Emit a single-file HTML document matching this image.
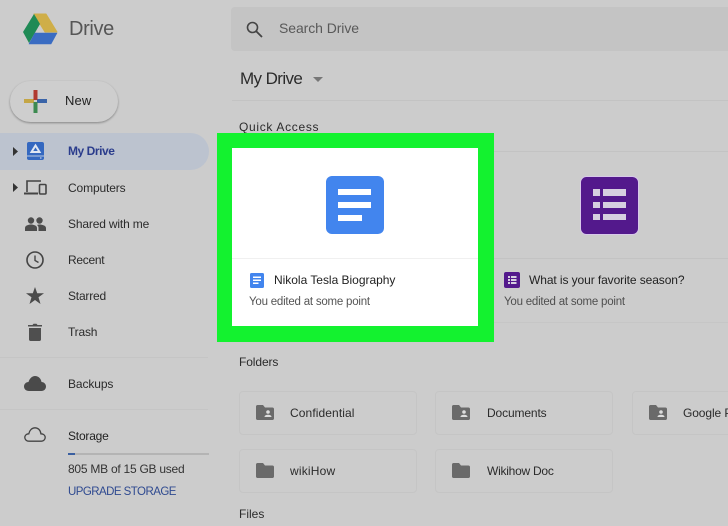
<!DOCTYPE html>
<html><head><meta charset="utf-8"><style>
html,body{margin:0;padding:0}
#p{position:relative;width:728px;height:526px;overflow:hidden;background:#cccccc;font-family:"Liberation Sans",sans-serif;color:#2a2a2a}
.t{position:absolute;white-space:nowrap;font-size:12px;line-height:14px;letter-spacing:-.15px;color:#2b2b2b}
.a{position:absolute}
svg{position:absolute;overflow:visible}
.fc{position:absolute;width:178px;height:44px;border:1px solid #c5c5c5;border-radius:4px;box-sizing:border-box}
.ln{position:absolute;height:1px;background:#c3c3c3}
</style></head><body><div id="p">
<!-- logo -->
<svg style="left:22px;top:13px" width="36" height="32" viewBox="0 0 36 32">
<path d="M12 1H24L35 19H23Z" fill="#cfae48" stroke="#cfae48" stroke-linejoin="round"/>
<path d="M12 1L1 19L7 30L18 11Z" fill="#1f8a55"/>
<path d="M7 31L13 20H35L29 31Z" fill="#3a6cc2" stroke="#3a6cc2" stroke-width=".6" stroke-linejoin="round"/>
</svg>
<div class="t" style="left:69px;top:17px;font-size:20px;line-height:24px;color:#565656;letter-spacing:-.35px">Drive</div>
<!-- new -->
<div class="a" style="left:10px;top:81px;width:108px;height:41px;border-radius:21px;background:#cecece;box-shadow:0 1px 2px rgba(0,0,0,.35)"></div>
<svg style="left:24px;top:90px" width="23" height="23" viewBox="0 0 23 23">
<rect x="0" y="9" width="10" height="4" fill="#c4a646"/><rect x="13" y="9" width="10" height="4" fill="#3a64a8"/>
<rect x="9.500" y="0" width="4" height="10" fill="#b03a30"/><rect x="9.500" y="12" width="4" height="11" fill="#3c8a50"/></svg>
<div class="t" style="left:65px;top:93px;font-size:13px;line-height:16px;color:#222;letter-spacing:.1px">New</div>
<!-- active -->
<div class="a" style="left:0;top:133px;width:209px;height:37px;border-radius:0 19px 19px 0;background:#bcc3cf"></div>
<svg style="left:13px;top:147px" width="5" height="9"><path d="M0 0L5 4.500L0 9Z" fill="#333"/></svg>
<svg style="left:13px;top:183px" width="5" height="9"><path d="M0 0L5 4.500L0 9Z" fill="#333"/></svg>
<svg style="left:27px;top:142px" width="17" height="18" viewBox="0 0 17 18">
<rect width="17" height="18" rx="2" fill="#3468c0"/><rect x="0" y="13.500" width="17" height="1" fill="#b9c7df"/>
<path d="M8.500 3.500L12.500 10H4.500Z" fill="none" stroke="#dfe6f2" stroke-width="2"/><rect x="13" y="15.500" width="1.500" height="1" fill="#dfe6f2"/></svg>
<div class="t" style="left:68px;top:144px;color:#2a3c8c;font-weight:bold;letter-spacing:-.45px">My Drive</div>
<svg style="left:24px;top:180px" width="23" height="15" viewBox="0 0 23 15">
<path d="M3 12V1H17" fill="none" stroke="#444" stroke-width="1.600"/><path d="M0 13.500H14" stroke="#444" stroke-width="2"/>
<rect x="15.500" y="4.500" width="6.500" height="9.500" rx="1" fill="none" stroke="#444" stroke-width="1.600"/></svg>
<div class="t" style="left:68px;top:181px;letter-spacing:-.13px">Computers</div>
<svg style="left:25px;top:217px" width="21" height="14" viewBox="0 0 21 14">
<circle cx="6" cy="3.500" r="3.200" fill="#4d4d4d"/><circle cx="14.500" cy="3.500" r="3.200" fill="#4d4d4d"/>
<path d="M0 14V11C0 8.500 3.500 7.500 6 7.500S12 8.500 12 11V14Z" fill="#4d4d4d"/><path d="M13.500 14V10.800C13.500 9.500 12.800 8.500 12 8C13 7.600 14 7.500 14.500 7.500C17 7.500 21 8.500 21 11V14Z" fill="#4d4d4d"/></svg>
<div class="t" style="left:68px;top:217px;letter-spacing:-.16px">Shared with me</div>
<svg style="left:26px;top:251px" width="18" height="18" viewBox="0 0 18 18"><circle cx="9" cy="9" r="8" fill="none" stroke="#444" stroke-width="1.600"/><path d="M9 4.500V9.500L12.500 11.500" fill="none" stroke="#444" stroke-width="1.400"/></svg>
<div class="t" style="left:68px;top:253px;letter-spacing:-.3px">Recent</div>
<svg style="left:26px;top:287px" width="18" height="17" viewBox="0 0 18 17"><path d="M9 0L11.200 6.200H18L12.500 10.200L14.500 17L9 13L3.500 17L5.500 10.200L0 6.200H6.800Z" fill="#4a4a4a"/></svg>
<div class="t" style="left:68px;top:289px;letter-spacing:-.2px">Starred</div>
<svg style="left:28px;top:323px" width="14" height="18" viewBox="0 0 14 18"><path d="M1 5H13V16.500C13 17.300 12.300 18 11.500 18H2.500C1.700 18 1 17.300 1 16.500Z" fill="#4f4f4f"/><path d="M0 2H4.500L5.500 .8H8.500L9.500 2H14V3.500H0Z" fill="#4f4f4f"/></svg>
<div class="t" style="left:68px;top:325px;letter-spacing:-.2px">Trash</div>
<div class="ln" style="left:0;top:357px;width:208px;background:#c5c5c5"></div>
<svg style="left:24px;top:376px" width="22" height="15" viewBox="0 0 22 15"><path d="M5 15C2 15 0 13 0 10.500C0 8 2 6 4.500 6C5.500 2.500 8 0 11 0C14.500 0 17 2.500 17.500 6C20 6 22 8 22 10.500C22 13 20 15 17.500 15Z" fill="#4a4a4a"/></svg>
<div class="t" style="left:68px;top:377px;letter-spacing:-.1px">Backups</div>
<div class="ln" style="left:0;top:409px;width:208px;background:#c5c5c5"></div>
<svg style="left:24px;top:427px" width="22" height="15" viewBox="0 0 22 15"><path d="M5 14.200C2.500 14.200 .8 12.500 .8 10.500C.8 8.300 2.500 6.800 4.800 6.800C5.500 3.200 8 .8 11 .8C14 .8 16.500 3 16.900 6.800C19.500 6.800 21.200 8.300 21.200 10.500C21.200 12.500 19.500 14.200 17.500 14.200Z" fill="none" stroke="#444" stroke-width="1.300"/></svg>
<div class="t" style="left:68px;top:429px;color:#222;letter-spacing:-.2px">Storage</div>
<div class="a" style="left:68px;top:453px;width:141px;height:2px;background:#b4b4b4"></div>
<div class="a" style="left:68px;top:453px;width:7px;height:2px;background:#3a5fa0"></div>
<div class="t" style="left:68px;top:462px;letter-spacing:-.25px;color:#333">805 MB of 15 GB used</div>
<div class="t" style="left:68px;top:485px;color:#2f4a90;font-size:11.500px;letter-spacing:-.55px">UPGRADE STORAGE</div>
<!-- search -->
<div class="a" style="left:231px;top:7px;width:497px;height:44px;background:#c4c4c4;border-radius:4px 0 0 4px"></div>
<svg style="left:246px;top:21px" width="17" height="17" viewBox="0 0 17 17"><circle cx="6.500" cy="6.500" r="5" fill="none" stroke="#444" stroke-width="1.600"/><path d="M10.200 10.200L16 16" stroke="#444" stroke-width="1.800"/></svg>
<div class="t" style="left:279px;top:20px;font-size:14px;line-height:17px;color:#595959;letter-spacing:-.08px">Search Drive</div>
<div class="t" style="left:240px;top:69px;font-size:17px;line-height:20px;color:#2b2b2b;letter-spacing:-.6px">My Drive</div>
<svg style="left:313px;top:77px" width="10" height="5"><path d="M0 0H10L5 5Z" fill="#777"/></svg>
<div class="ln" style="left:232px;top:100px;width:496px;background:#c3c3c3"></div>
<div class="t" style="left:239px;top:120px;letter-spacing:.68px">Quick Access</div>
<!-- forms card lines -->
<div class="ln" style="left:494px;top:151px;width:234px"></div>
<div class="ln" style="left:494px;top:258px;width:234px"></div>
<div class="ln" style="left:494px;top:322px;width:234px;background:#c6c6c6"></div>
<!-- forms -->
<svg style="left:580px;top:176px" width="59" height="59" viewBox="0 0 59 59">
<rect x=".5" y=".5" width="58" height="58" rx="6" fill="#53198c" stroke="#d8c8ea" stroke-width="1"/>
<g fill="#d6cfe0"><rect x="13" y="13" width="7" height="7"/><rect x="13" y="26" width="7" height="6"/><rect x="13" y="38" width="7" height="6"/>
<rect x="23" y="13" width="23" height="7"/><rect x="23" y="26" width="23" height="6"/><rect x="23" y="38" width="23" height="6"/></g></svg>
<svg style="left:504px;top:272px" width="16" height="16" viewBox="0 0 16 16"><rect width="16" height="16" rx="2" fill="#53198c"/><g fill="#d6cfe0"><rect x="4" y="4" width="2" height="2"/><rect x="4" y="7" width="2" height="2"/><rect x="4" y="10" width="2" height="2"/><rect x="7" y="4" width="5.500" height="2"/><rect x="7" y="7" width="5.500" height="2"/><rect x="7" y="10" width="5.500" height="2"/></g></svg>
<div class="t" style="left:529px;top:273px;letter-spacing:-.09px;color:#222">What is your favorite season?</div>
<div class="t" style="left:504px;top:295px;font-size:11.500px;color:#4f4f4f;letter-spacing:-.22px">You edited at some point</div>
<!-- highlight -->
<div class="a" style="left:217px;top:133px;width:277px;height:209px;background:#13f22f"></div>
<div class="a" style="left:232px;top:148px;width:246px;height:178px;background:#fff"></div>
<div class="a" style="left:232px;top:258px;width:246px;height:1px;background:#f0f0f0"></div>
<svg style="left:326px;top:176px" width="58" height="58" viewBox="0 0 58 58"><rect width="58" height="58" rx="6" fill="#4285ee"/><g fill="#fff"><rect x="12" y="13" width="33" height="6"/><rect x="12" y="26" width="33" height="6"/><rect x="12" y="39" width="24" height="6"/></g></svg>
<svg style="left:250px;top:273px" width="14" height="15" viewBox="0 0 14 15"><rect width="14" height="15" rx="1.500" fill="#4285ee"/><g fill="#fff"><rect x="3" y="3.500" width="8" height="1.500"/><rect x="3" y="6.500" width="8" height="1.500"/><rect x="3" y="9.500" width="5.500" height="1.500"/></g></svg>
<div class="t" style="left:274px;top:273px;letter-spacing:-.02px;color:#222">Nikola Tesla Biography</div>
<div class="t" style="left:249px;top:295px;font-size:11.500px;color:#555;letter-spacing:-.22px">You edited at some point</div>
<!-- folders -->
<div class="t" style="left:239px;top:355px;letter-spacing:-.1px">Folders</div>
<div class="fc" style="left:239px;top:391px"></div>
<div class="fc" style="left:435px;top:391px"></div>
<div class="fc" style="left:632px;top:391px;width:120px"></div>
<div class="fc" style="left:239px;top:449px"></div>
<div class="fc" style="left:435px;top:449px"></div>
<svg style="left:256px;top:405px" width="18" height="15" viewBox="0 0 18 15"><path d="M1.500 0H7L9 2.500H16.500C17.300 2.500 18 3.200 18 4V13.500C18 14.300 17.300 15 16.500 15H1.500C.7 15 0 14.300 0 13.500V1.500C0 .7.7 0 1.500 0Z" fill="#6a6a6a"/><circle cx="12" cy="7" r="1.800" fill="#ddd"/><path d="M8.500 12C8.500 10.300 10.500 9.800 12 9.800S15.500 10.300 15.500 12Z" fill="#ddd"/></svg>
<svg style="left:452px;top:405px" width="18" height="15" viewBox="0 0 18 15"><path d="M1.500 0H7L9 2.500H16.500C17.300 2.500 18 3.200 18 4V13.500C18 14.300 17.300 15 16.500 15H1.500C.7 15 0 14.300 0 13.500V1.500C0 .7.7 0 1.500 0Z" fill="#6a6a6a"/><circle cx="12" cy="7" r="1.800" fill="#ddd"/><path d="M8.500 12C8.500 10.300 10.500 9.800 12 9.800S15.500 10.300 15.500 12Z" fill="#ddd"/></svg>
<svg style="left:649px;top:405px" width="18" height="15" viewBox="0 0 18 15"><path d="M1.500 0H7L9 2.500H16.500C17.300 2.500 18 3.200 18 4V13.500C18 14.300 17.300 15 16.500 15H1.500C.7 15 0 14.300 0 13.500V1.500C0 .7.7 0 1.500 0Z" fill="#6a6a6a"/><circle cx="12" cy="7" r="1.800" fill="#ddd"/><path d="M8.500 12C8.500 10.300 10.500 9.800 12 9.800S15.500 10.300 15.500 12Z" fill="#ddd"/></svg>
<svg style="left:256px;top:463px" width="18" height="15" viewBox="0 0 18 15"><path d="M1.500 0H7L9 2.500H16.500C17.300 2.500 18 3.200 18 4V13.500C18 14.300 17.300 15 16.500 15H1.500C.7 15 0 14.300 0 13.500V1.500C0 .7.7 0 1.500 0Z" fill="#6a6a6a"/></svg>
<svg style="left:452px;top:463px" width="18" height="15" viewBox="0 0 18 15"><path d="M1.500 0H7L9 2.500H16.500C17.300 2.500 18 3.200 18 4V13.500C18 14.300 17.300 15 16.500 15H1.500C.7 15 0 14.300 0 13.500V1.500C0 .7.7 0 1.500 0Z" fill="#6a6a6a"/></svg>
<div class="t" style="left:290px;top:406px;letter-spacing:.1px">Confidential</div>
<div class="t" style="left:487px;top:406px;letter-spacing:-.13px">Documents</div>
<div class="t" style="left:683px;top:406px;letter-spacing:-.1px">Google Pho</div>
<div class="t" style="left:290px;top:464px;letter-spacing:.2px">wikiHow</div>
<div class="t" style="left:487px;top:464px;letter-spacing:-.25px">Wikihow Doc</div>
<div class="t" style="left:239px;top:507px;letter-spacing:0">Files</div>
</div></body></html>
